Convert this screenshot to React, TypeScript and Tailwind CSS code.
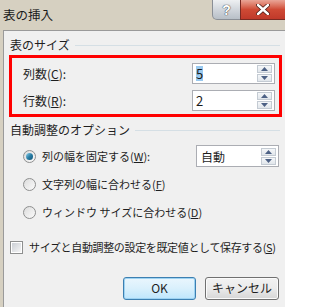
const font = { fontFamily: '"Noto Sans CJK JP", "Noto Sans", sans-serif' };

function Spinner() {
  return (
    <div className="flex flex-col gap-[1px] mr-[2px]">
      {["up", "down"].map((d) => (
        <div
          key={d}
          className="w-[15px] h-[8px] border border-[#c4cbd3] bg-gradient-to-b from-[#f5f7f9] to-[#e1e6eb] flex items-center justify-center"
        >
          <svg width="7" height="4" viewBox="0 0 7 4">
            {d === "up" ? <path d="M0 4 L3.5 0 L7 4 Z" fill="#4d6185" /> : <path d="M0 0 L3.5 4 L7 0 Z" fill="#4d6185" />}
          </svg>
        </div>
      ))}
    </div>
  );
}

function NumBox({ value, selected }: { value: string; selected?: boolean }) {
  return (
    <div className="w-[83px] h-[21px] border border-[#abadb3] bg-white flex items-center justify-between pl-[3px]">
      <span className={`text-[13px] leading-[15px] ${selected ? "bg-[#99c9ef] text-[#1a1a1a]" : "text-[#1a1a1a]"}`}>{value}</span>
      <Spinner />
    </div>
  );
}

function Radio({ checked }: { checked?: boolean }) {
  return (
    <div className="w-[13px] h-[13px] rounded-full border border-[#8e8f8f] bg-gradient-to-br from-[#dcdcdc] to-[#fbfbfb] flex items-center justify-center">
      {checked && <div className="w-[7px] h-[7px] rounded-full bg-gradient-to-br from-[#8ad3ef] via-[#2b7fa6] to-[#0f5477]" />}
    </div>
  );
}

function GroupLabel({ children }: { children: React.ReactNode }) {
  return (
    <div className="flex items-center gap-[5px] pl-[6px] pr-[5px]">
      <span className="text-[12px] leading-[16px] text-[#1e1e1e] whitespace-nowrap">{children}</span>
      <div className="flex-1 h-[1px] bg-[#d5dfe5]" />
    </div>
  );
}

export default function App() {
  return (
    <div className="w-[285px] h-[307px] overflow-hidden bg-[#d6d0c1] flex flex-col" style={font}>
      {/* Title bar */}
      <div className="h-[30px] relative shrink-0">
        <span className="absolute left-[3px] top-[6px] text-[12.5px] leading-[18px] text-[#1b1b1b]">表の挿入</span>
        <div className="absolute left-[212px] top-0 w-[29px] h-[20px] rounded-bl-[5px] border border-t-0 border-[#8a8f96] bg-gradient-to-b from-[#eef0f2] via-[#d1d6dc] to-[#b8bfc7] flex items-center justify-center">
          <span className="text-[14px] font-bold leading-none text-white" style={{ fontFamily: '"Liberation Sans", sans-serif', textShadow: "0 0 1px #333, 0 0 1px #333" }}>?</span>
        </div>
        <div className="absolute left-[240px] top-0 w-[46px] h-[20px] border border-t-0 border-[#7a2a22] bg-gradient-to-b from-[#e9a597] via-[#cf4a35] to-[#c0392a] flex items-center justify-center">
          <svg width="14" height="11" viewBox="0 0 14 11">
            <path d="M2 1 L12 10 M12 1 L2 10" stroke="#4a1a14" strokeWidth="4" strokeLinecap="round" />
            <path d="M2 1 L12 10 M12 1 L2 10" stroke="#ffffff" strokeWidth="2.4" strokeLinecap="round" />
          </svg>
        </div>
      </div>

      {/* Body */}
      <div className="flex-1 ml-[3px] border-l border-t border-[#9a9a9a] bg-[#f0f0f0] flex flex-col text-[#1e1e1e]">
        <div className="pt-[6px]">
          <GroupLabel>表のサイズ</GroupLabel>
        </div>

        <div className="mt-[2px] ml-[5px] mr-[3px] border-[3px] border-[#ff0000] pl-[11px] pr-[4px] pt-[5px] pb-[3px] flex flex-col gap-[6px]">
          <div className="flex items-center justify-between">
            <span className="text-[12px]">列数(<span className="underline">C</span>):</span>
            <NumBox value="5" selected />
          </div>
          <div className="flex items-center justify-between">
            <span className="text-[12px]">行数(<span className="underline">R</span>):</span>
            <NumBox value="2" />
          </div>
        </div>

        <div className="mt-[5px]">
          <GroupLabel>自動調整のオプション</GroupLabel>
        </div>

        <div className="flex flex-col mt-[7px] pl-[19px] pr-[6px] text-[11px]">
          <div className="h-[22px] flex items-center justify-between">
            <div className="flex items-center gap-[6px]">
              <Radio checked />
              <span>列の幅を固定する(<span className="underline">W</span>):</span>
            </div>
            <div className="w-[83px] h-[22px] border border-[#abadb3] bg-white flex items-center justify-between pl-[4px]">
              <span className="text-[12px] leading-[15px]">自動</span>
              <Spinner />
            </div>
          </div>
          <div className="h-[22px] mt-[6px] flex items-center gap-[6px]">
            <Radio />
            <span>文字列の幅に合わせる(<span className="underline">F</span>)</span>
          </div>
          <div className="h-[22px] mt-[6px] flex items-center gap-[6px]">
            <Radio />
            <span>ウィンドウ サイズに合わせる(<span className="underline">D</span>)</span>
          </div>
        </div>

        <div className="mt-[16px] pl-[6px] flex items-center gap-[6px] text-[11px]">
          <div className="w-[13px] h-[13px] border border-[#8e8f8f] p-[1px] bg-white">
            <div className="w-full h-full bg-gradient-to-br from-[#cbcfd5] to-[#f6f6f6]" />
          </div>
          <span className="whitespace-nowrap tracking-[-0.35px]">サイズと自動調整の設定を既定値として保存する(<span className="underline">S</span>)</span>
        </div>

        <div className="mt-[21px] flex justify-end gap-[9px] pr-[6px]">
          <button className="w-[73px] h-[23px] rounded-[3px] border border-[#3c7fb1] bg-gradient-to-b from-[#eaf6fd] via-[#d9f0fc] to-[#bee6fd] text-[12px] shadow-[inset_0_0_0_1px_#9ed3f2]">
            OK
          </button>
          <button className="w-[74px] h-[23px] rounded-[3px] border border-[#707070] bg-gradient-to-b from-[#f2f2f2] via-[#ebebeb] to-[#d6d6d6] text-[12px] shadow-[inset_0_0_0_1px_#fbfbfb]">
            キャンセル
          </button>
        </div>
      </div>
    </div>
  );
}
